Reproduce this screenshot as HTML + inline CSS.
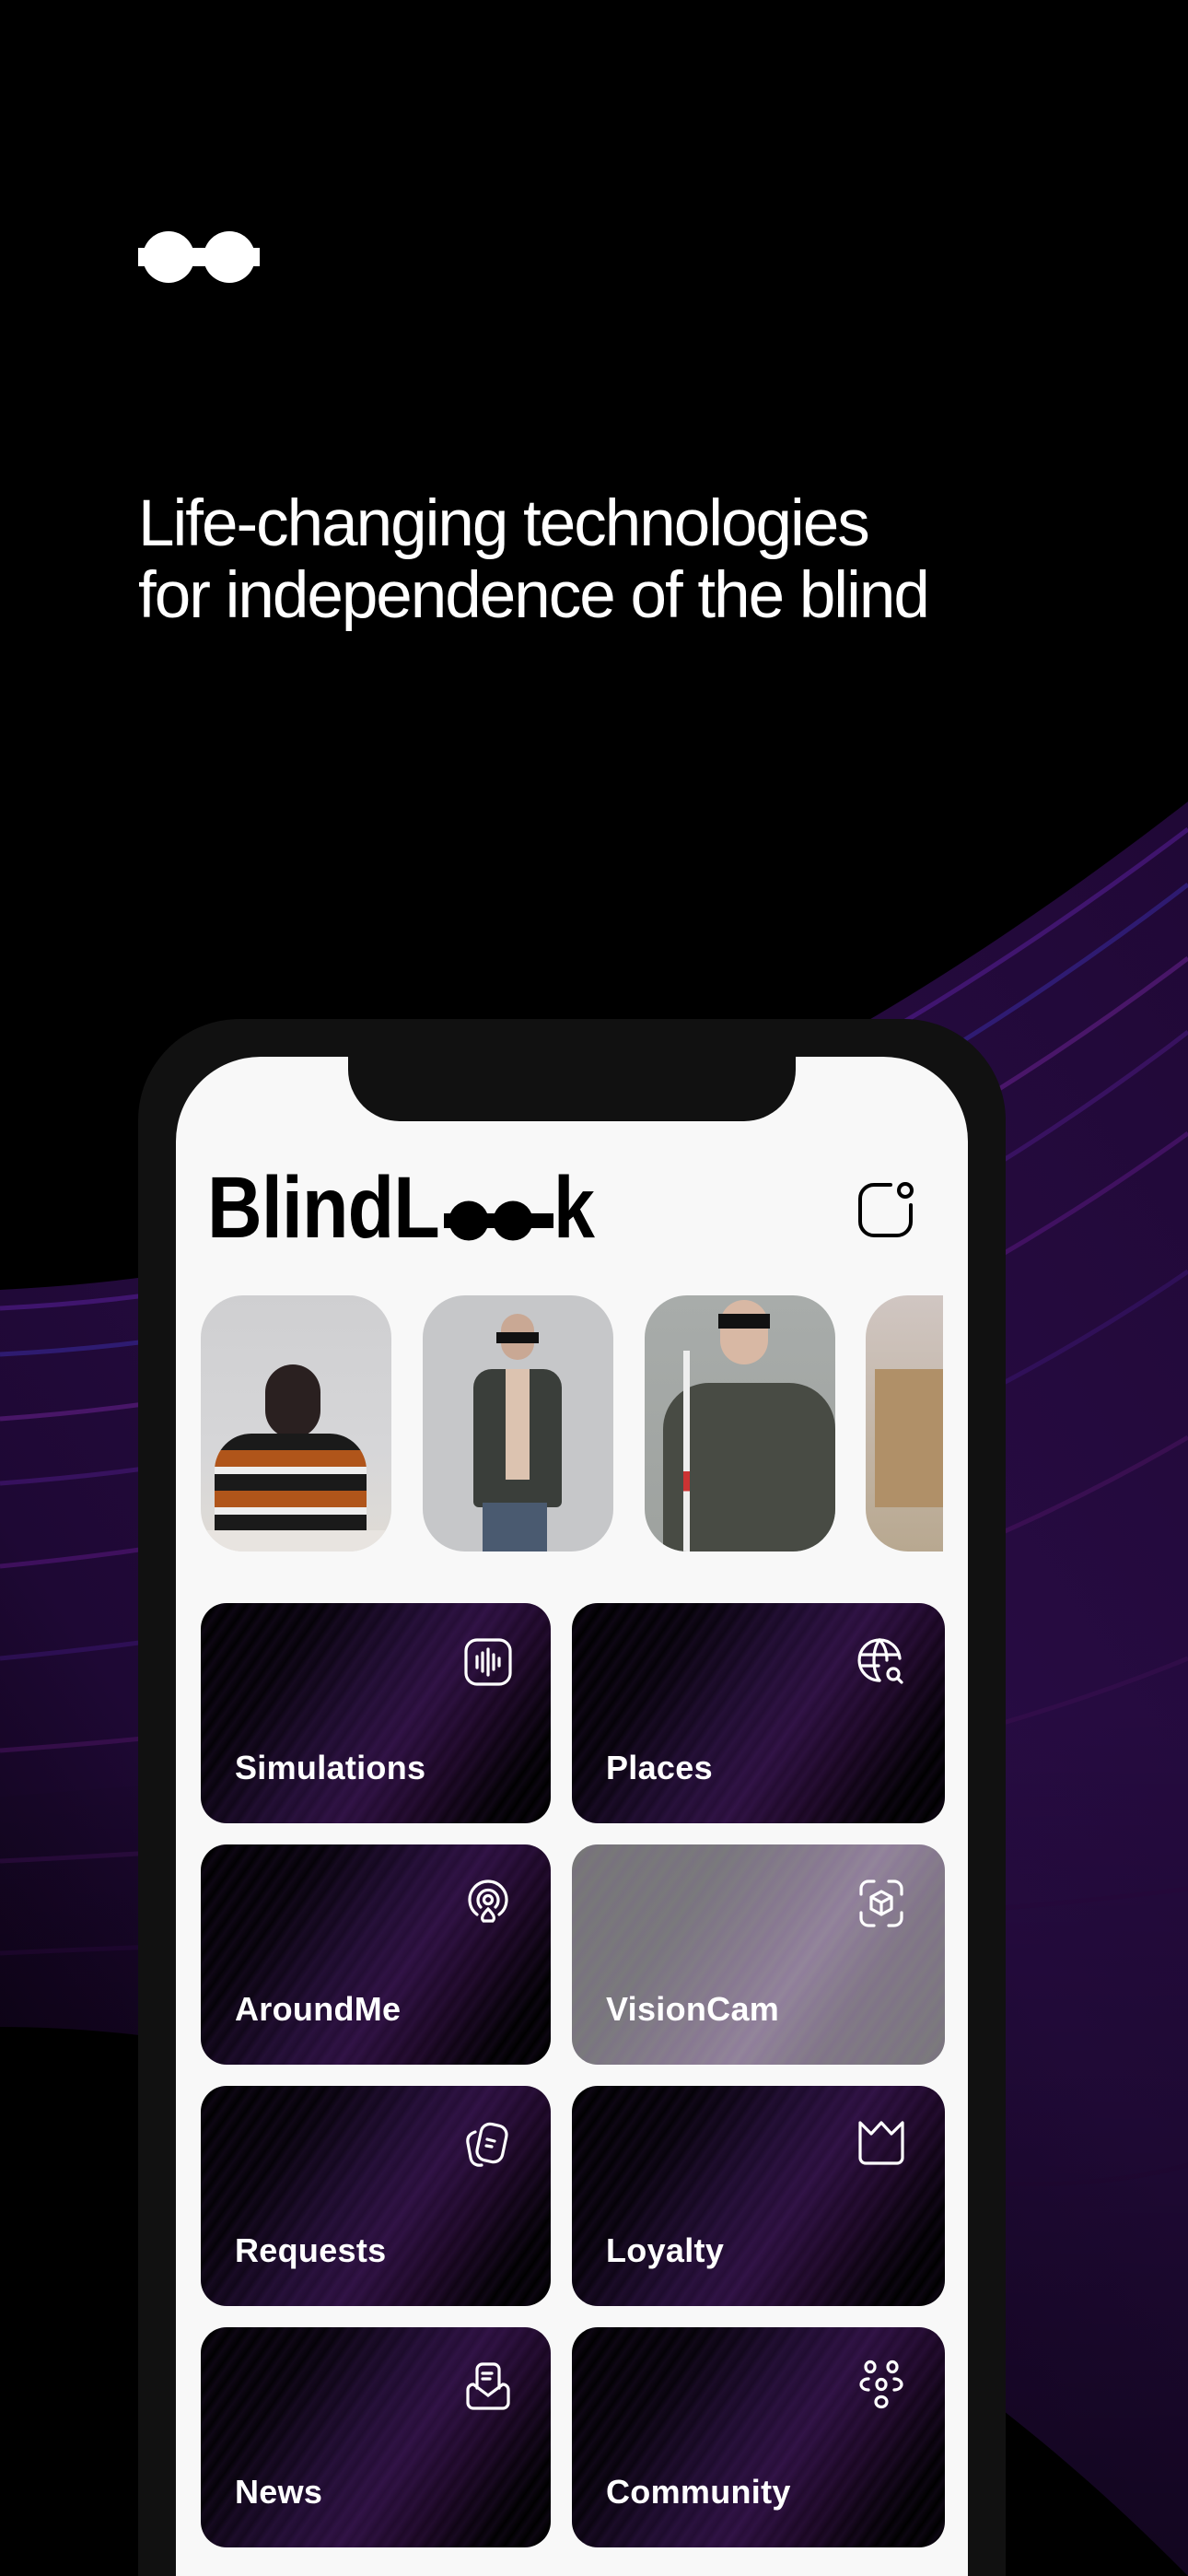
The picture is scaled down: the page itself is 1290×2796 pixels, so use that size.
<!DOCTYPE html>
<html><head><meta charset="utf-8">
<style>
html,body{margin:0;padding:0;background:#000;overflow:hidden;width:1290px;height:2796px;}
#wrap{width:1290px;height:2796px;position:relative;overflow:hidden;font-family:"Liberation Sans",sans-serif;background:#000;}
.abs{position:absolute;}
.head{left:150px;color:#fff;font-size:71px;letter-spacing:-2px;line-height:78px;top:530px;font-weight:400;}
.phone{left:150px;top:1106px;width:942px;height:1690px;background:#111;border-radius:110px 110px 0 0;}
.screen{left:191px;top:1147px;width:860px;height:1649px;background:#f8f8f8;border-radius:92px 92px 0 0;overflow:hidden;}
.notch{left:378px;top:1140px;width:486px;height:77px;background:#111;border-radius:0 0 56px 56px;}
.photo{top:1406px;height:278px;border-radius:46px;overflow:hidden;}
.tile{border-radius:28px;overflow:hidden;background:
 linear-gradient(125deg,#000 0%,#050208 25%,#1e0c2e 45%,#2a0f3c 58%,#1a0722 72%,#000 88%);}
.tile::before{content:"";position:absolute;inset:0;background:repeating-linear-gradient(125deg,rgba(120,60,170,0) 0px,rgba(120,60,170,.10) 6px,rgba(120,60,170,0) 14px);}
.tile.gray{background:linear-gradient(125deg,#777 0%,#7a7a7c 30%,#8a7f90 50%,#93869a 60%,#827a86 75%,#7a7a7a 100%);}
.lbl{position:absolute;left:37px;color:#fff;font-size:36px;font-weight:bold;letter-spacing:0.3px;}
.ic{position:absolute;width:56px;height:56px;}
</style></head><body><div id="wrap">

<svg class="abs" style="left:0;top:0" width="1290" height="2796" viewBox="0 0 1290 2796">
<defs>
<linearGradient id="bg1" x1="0" y1="1" x2="1" y2="0">
<stop offset="0" stop-color="#14051f" stop-opacity="0.3"/>
<stop offset="0.3" stop-color="#1e0834"/>
<stop offset="0.6" stop-color="#280c44"/>
<stop offset="1" stop-color="#200836"/>
</linearGradient>
<linearGradient id="fade" x1="0" y1="0" x2="0" y2="1">
<stop offset="0" stop-color="#000" stop-opacity="0"/>
<stop offset="1" stop-color="#000" stop-opacity="1"/>
</linearGradient>
</defs>
<path d="M0 1400 C 400 1380, 800 1250, 1290 870 L1290 2796 C 900 2400, 400 2200, 0 2200 Z" fill="url(#bg1)"/>
<g fill="none" stroke-width="5" stroke-opacity="0.55">
<path d="M0 1420 C 400 1400, 800 1270, 1290 900" stroke="#5a1f9a"/>
<path d="M0 1470 C 400 1450, 820 1320, 1290 960" stroke="#3a2aa0"/>
<path d="M0 1540 C 420 1510, 840 1380, 1290 1040" stroke="#6a2090"/>
<path d="M0 1610 C 420 1580, 860 1450, 1290 1120" stroke="#4a1a80"/>
<path d="M0 1700 C 420 1660, 860 1540, 1290 1230" stroke="#5a1880"/>
<path d="M0 1800 C 420 1760, 880 1660, 1290 1380" stroke="#3a1670"/>
<path d="M0 1900 C 420 1870, 880 1800, 1290 1560" stroke="#4a1460"/>
<path d="M0 2020 C 420 2000, 900 1960, 1290 1800" stroke="#3a1050"/>
<path d="M0 2120 C 420 2100, 900 2100, 1290 2050" stroke="#2a0a40"/>
<path d="M600 2300 C 900 2350, 1100 2400, 1290 2350" stroke="#2a0a40"/>
</g>
<path d="M0 1950 L1290 1850 L1290 2796 L0 2796 Z" fill="url(#fade)" opacity="0.5"/>
</svg>

<svg class="abs" style="left:150px;top:250px" width="132" height="58" viewBox="0 0 132 58">
<circle cx="33" cy="29" r="28" fill="#fff"/><circle cx="99" cy="29" r="28" fill="#fff"/>
<rect x="0" y="19" width="132" height="20" fill="#fff"/>
</svg>

<div class="abs head">Life-changing technologies<br>for independence of the blind</div>

<div class="abs phone"></div>
<div class="abs screen"></div>
<div class="abs notch"></div>

<div class="abs" style="left:225px;top:1256px;font-size:95px;font-weight:bold;color:#000;transform:scaleX(0.87);transform-origin:left top;letter-spacing:-1px;line-height:110px">BlindL</div>
<svg class="abs" style="left:482px;top:1303px" width="119" height="44" viewBox="0 0 119 44">
<circle cx="27" cy="22" r="21.5" fill="#000"/><circle cx="75" cy="22" r="21.5" fill="#000"/>
<rect x="0" y="14" width="119" height="16" fill="#000"/>
</svg>
<div class="abs" style="left:601px;top:1256px;font-size:95px;font-weight:bold;color:#000;transform:scaleX(0.85);transform-origin:left top;line-height:110px">k</div>

<svg class="abs" style="left:931px;top:1282px" width="62" height="62" viewBox="0 0 62 62" fill="none" stroke="#000" stroke-width="4" stroke-linecap="round">
<path d="M36 4 H18 A15 15 0 0 0 3 19 V44 A15 15 0 0 0 18 59 H43 A15 15 0 0 0 58 44 V26"/>
<circle cx="52" cy="10" r="7"/>
</svg>

<div class="abs photo" style="left:218px;width:207px;background:linear-gradient(180deg,#cfcfd1 0%,#d6d6d8 60%,#e0dcd6 100%)">
 <div class="abs" style="left:70px;top:75px;width:60px;height:80px;border-radius:30px;background:#2a2020"></div>
 <div class="abs" style="left:15px;top:150px;width:165px;height:110px;border-radius:40px 40px 0 0;background:repeating-linear-gradient(180deg,#1a1a1a 0 18px,#b0551a 18px 36px,#eee 36px 44px)"></div>
 <div class="abs" style="left:0;top:255px;width:207px;height:23px;background:#e8e4e0"></div>
</div>
<div class="abs photo" style="left:459px;width:207px;background:#c6c7c9">
 <div class="abs" style="left:85px;top:20px;width:36px;height:50px;border-radius:18px;background:#c9a894"></div>
 <div class="abs" style="left:80px;top:40px;width:46px;height:12px;background:#111"></div>
 <div class="abs" style="left:55px;top:80px;width:96px;height:150px;border-radius:20px 20px 6px 6px;background:#3a3e3a"></div>
 <div class="abs" style="left:90px;top:80px;width:26px;height:120px;background:#dcc3b0"></div>
 <div class="abs" style="left:65px;top:225px;width:70px;height:53px;background:#4a5a70"></div>
</div>
<div class="abs photo" style="left:700px;width:207px;background:linear-gradient(180deg,#a8acaa,#9ea29f)">
 <div class="abs" style="left:82px;top:5px;width:52px;height:70px;border-radius:26px;background:#d8b8a4"></div>
 <div class="abs" style="left:80px;top:20px;width:56px;height:16px;background:#111"></div>
 <div class="abs" style="left:20px;top:95px;width:187px;height:183px;border-radius:50px 50px 0 0;background:#484b44"></div>
 <div class="abs" style="left:42px;top:60px;width:7px;height:218px;background:linear-gradient(180deg,#eee 60%,#c33 60%,#c33 70%,#eee 70%)"></div>
</div>
<div class="abs photo" style="left:940px;width:84px;border-radius:46px 0 0 46px;background:linear-gradient(180deg,#d0c6c2,#b8a890)">
 <div class="abs" style="left:10px;top:80px;width:74px;height:150px;background:#b09068"></div>
</div>

<div class="abs tile" style="left:218px;top:1740px;width:380px;height:239px"><div class="lbl" style="top:158px">Simulations</div>
<svg class="ic" style="left:284px;top:36px" viewBox="0 0 56 56" fill="none" stroke="#fff" stroke-width="3.2" stroke-linecap="round"><rect x="4" y="4" width="48" height="48" rx="12"/><path d="M16 22v12M22 18v20M28 14v28M34 20v16M40 24v8"/></svg></div>

<div class="abs tile" style="left:621px;top:1740px;width:405px;height:239px"><div class="lbl" style="top:158px">Places</div>
<svg class="ic" style="left:308px;top:36px" viewBox="0 0 56 56" fill="none" stroke="#fff" stroke-width="3.2" stroke-linecap="round"><path d="M48 24A22 22 0 1 0 26 48"/><path d="M26 4C18 14 18 38 26 48M26 4C32 10 34 18 34 26"/><path d="M5 20h42M5 32h20"/><circle cx="41" cy="41" r="6"/><path d="M45.5 45.5L50 50"/></svg></div>

<div class="abs tile" style="left:218px;top:2002px;width:380px;height:239px"><div class="lbl" style="top:158px">AroundMe</div>
<svg class="ic" style="left:284px;top:36px" viewBox="0 0 56 56" fill="none" stroke="#fff" stroke-width="3.2" stroke-linecap="round"><path d="M16 40A20 20 0 1 1 40 40"/><path d="M20 32A11 11 0 1 1 36 32"/><circle cx="28" cy="24" r="4.5"/><path d="M28 34c-6 6-8 10-5 13h10c3-3 1-7-5-13z"/></svg></div>

<div class="abs tile gray" style="left:621px;top:2002px;width:405px;height:239px"><div class="lbl" style="top:158px">VisionCam</div>
<svg class="ic" style="left:308px;top:36px" viewBox="0 0 56 56" fill="none" stroke="#fff" stroke-width="3.2" stroke-linecap="round" stroke-linejoin="round"><path d="M6 18V12a8 8 0 0 1 8-8h6M36 4h6a8 8 0 0 1 8 8v6M50 38v6a8 8 0 0 1-8 8h-6M20 52h-6a8 8 0 0 1-8-8v-6"/><path d="M28 15l11 6v13l-11 6-11-6V21zM17 21l11 6 11-6M28 27v13"/></svg></div>

<div class="abs tile" style="left:218px;top:2264px;width:380px;height:239px"><div class="lbl" style="top:158px">Requests</div>
<svg class="ic" style="left:284px;top:36px" viewBox="0 0 56 56" fill="none" stroke="#fff" stroke-width="3.2" stroke-linecap="round"><path d="M14 14c-6 2-9 6-8 12l3 16c1 6 6 9 12 8"/><rect x="18" y="6" width="28" height="40" rx="10" transform="rotate(12 32 26)"/><path d="M27 22l8 2M26 29l6 1"/></svg></div>

<div class="abs tile" style="left:621px;top:2264px;width:405px;height:239px"><div class="lbl" style="top:158px">Loyalty</div>
<svg class="ic" style="left:308px;top:34px" viewBox="0 0 56 56" fill="none" stroke="#fff" stroke-width="3.2" stroke-linejoin="round"><path d="M5 6l12 12 11-12 11 12 12-12v38a6 6 0 0 1-6 6H11a6 6 0 0 1-6-6z"/></svg></div>

<div class="abs tile" style="left:218px;top:2526px;width:380px;height:239px"><div class="lbl" style="top:158px">News</div>
<svg class="ic" style="left:284px;top:36px" viewBox="0 0 56 56" fill="none" stroke="#fff" stroke-width="3.2" stroke-linecap="round"><path d="M16 30V10a6 6 0 0 1 6-6h12a6 6 0 0 1 6 6v20"/><path d="M22 14h10M22 20h8"/><path d="M6 32a6 6 0 0 1 6-6l16 12 16-12a6 6 0 0 1 6 6v14a6 6 0 0 1-6 6H12a6 6 0 0 1-6-6z"/></svg></div>

<div class="abs tile" style="left:621px;top:2526px;width:405px;height:239px"><div class="lbl" style="top:158px">Community</div>
<svg class="ic" style="left:308px;top:34px" viewBox="0 0 56 56" fill="none" stroke="#fff" stroke-width="3.2" stroke-linecap="round"><ellipse cx="16" cy="9" rx="5" ry="5.5"/><ellipse cx="40" cy="9" rx="5" ry="5.5"/><ellipse cx="28" cy="28" rx="5" ry="5.5"/><ellipse cx="28" cy="47" rx="6" ry="5.5"/><path d="M14 22c-6 0-8 4-8 6s2 6 8 6M42 22c6 0 8 4 8 6s-2 6-8 6"/></svg></div>

</div></body></html>
